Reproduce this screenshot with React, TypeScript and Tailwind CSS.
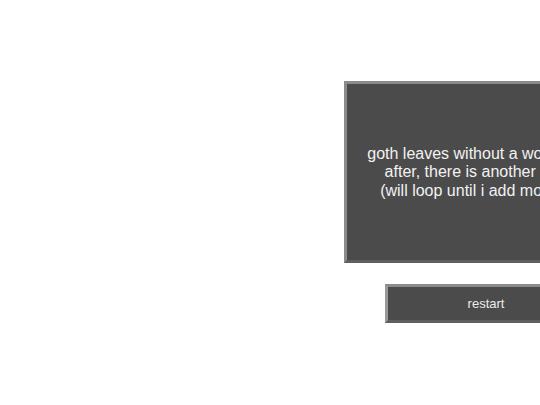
import React from 'react';

export default function App() {
  const lines = [
    'goth leaves without a word. soon,',
    'after, there is another scene.',
    '(will loop until i add more text)',
  ];

  return (
    <div className="w-screen h-screen overflow-hidden bg-white" style={{ fontFamily: '"Liberation Sans", Arial, sans-serif' }}>
      <div className="flex flex-col items-start pl-[344px] pt-[81px] w-[700px]">
        {/* Scene box */}
        <div className="w-[284px] h-[182px] shrink-0 flex flex-col items-center justify-center bg-[#4b4b4b] border-[3px] border-t-[#8e8a8a] border-l-[#8e8a8a] border-b-[#5f5f5f] border-r-[#5f5f5f] text-[16px] leading-[18.5px] text-[#f2f2f2] text-center pt-px">
          {lines.map((l) => (
            <p key={l} className="whitespace-nowrap">{l}</p>
          ))}
        </div>

        <button className="mt-[21px] ml-[41px] w-[202px] h-[39px] shrink-0 bg-[#4b4b4b] border-[3px] border-t-[#8e8a8a] border-l-[#9c9898] border-b-[#5f5f5f] border-r-[#5f5f5f] text-[13px] text-[#ececec] pt-px">
          restart
        </button>
      </div>
    </div>
  );
}
